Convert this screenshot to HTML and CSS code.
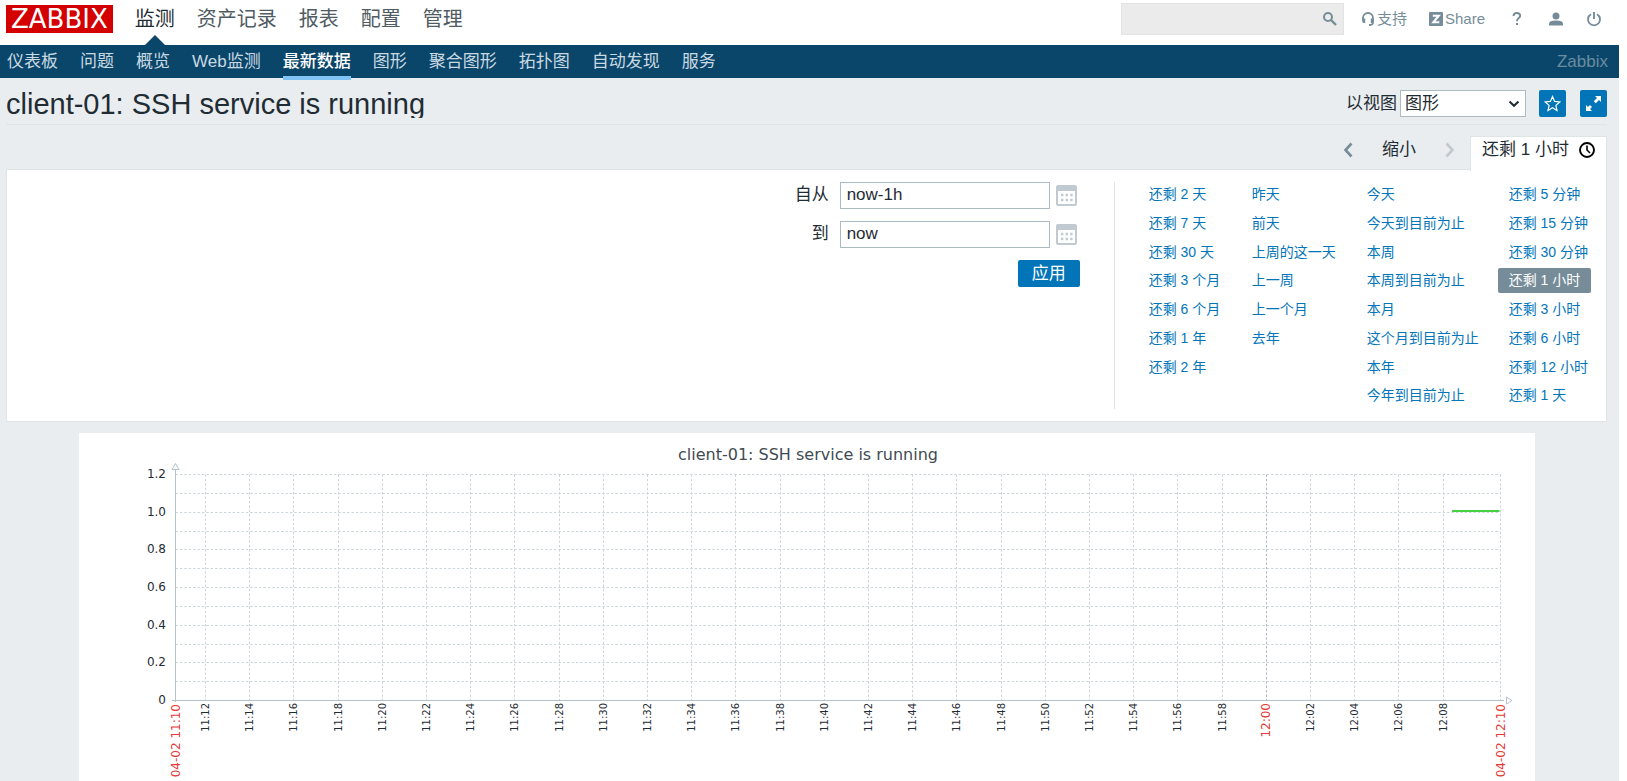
FILE: index.html
```html
<!DOCTYPE html>
<html lang="zh-CN">
<head>
<meta charset="utf-8">
<title>client-01: SSH service is running</title>
<link rel="stylesheet" href="styles.css">
</head>
<body>
<header class="top">
  <a class="logo" href="#">ZABBIX</a>
  <nav class="main-nav">
    <a class="selected" href="#">监测</a>
    <a href="#">资产记录</a>
    <a href="#">报表</a>
    <a href="#">配置</a>
    <a href="#">管理</a>
  </nav>
  <div class="tools">
    <form class="search">
      <input type="text" aria-label="搜索">
      <button type="button" aria-label="搜索">
        <svg width="16" height="16" viewBox="0 0 16 16"><circle cx="6" cy="6" r="4" fill="none" stroke="#768d99" stroke-width="2"/><path d="M9 9l5 5" stroke="#768d99" stroke-width="2.4"/></svg>
      </button>
    </form>
    <a class="support" href="#"><svg width="14" height="16" viewBox="0 0 14 16"><path d="M2 9V7a5 5 0 0 1 10 0V11.500Q12 14 8 14" fill="none" stroke="#768d99" stroke-width="1.800"/><path d="M1.200 7.500h3v4.500H2.800Q1.200 12 1.200 10zM9.800 7.500h3v2.500q0 2-1.500 2H9.800z" fill="#768d99"/></svg>支持</a>
    <a class="share" href="#"><svg width="14" height="14" viewBox="0 0 14 14"><rect width="14" height="14" rx="1" fill="#768d99"/><path d="M3.800 3.700h6L4.300 10.300H10.300" fill="none" stroke="#fff" stroke-width="2"/></svg>Share</a>
    <a class="help" href="#" aria-label="帮助"><svg width="10" height="16" viewBox="0 0 10 16"><path d="M1.500 5Q1.500 2 4.800 2T8.200 4.800Q8.200 6 6.500 7.200Q4.900 8.300 4.900 10.300" fill="none" stroke="#768d99" stroke-width="1.900"/><rect x="4" y="12" width="2" height="2" fill="#768d99"/></svg></a>
    <a class="user" href="#" aria-label="用户"><svg width="16" height="16" viewBox="0 0 16 16"><circle cx="8" cy="5" r="3.500" fill="#768d99"/><path d="M1 14.500V12.500Q1 9.500 8 9.500T15 12.500V14.500z" fill="#768d99"/></svg></a>
    <a class="power" href="#" aria-label="退出"><svg width="16" height="16" viewBox="0 0 16 16"><path d="M5 3.200A6 6 0 1 0 11 3.200M8 1v7" fill="none" stroke="#768d99" stroke-width="1.900"/></svg></a>
  </div>
</header>
<nav class="sub-nav">
  <a href="#">仪表板</a>
  <a href="#">问题</a>
  <a href="#">概览</a>
  <a href="#">Web监测</a>
  <a class="selected" href="#">最新数据</a>
  <a href="#">图形</a>
  <a href="#">聚合图形</a>
  <a href="#">拓扑图</a>
  <a href="#">自动发现</a>
  <a href="#">服务</a>
  <span class="server">Zabbix</span>
</nav>
<main>
  <div class="title-row">
    <h1>client-01: SSH service is running</h1>
    <form class="view">
      <label for="view-as">以视图</label>
      <span class="select-wrap"><select id="view-as"><option>图形</option></select><svg class="chevron" width="12" height="8" viewBox="0 0 12 8"><path d="M1.500 1.500L6 5.800L10.500 1.500" fill="none" stroke="#1f2c33" stroke-width="2"/></svg></span>
      <button class="square" type="button" aria-label="收藏"><svg width="17" height="17" viewBox="0 0 17 17"><path d="M8.500 1.500L10.600 6.400L15.800 6.900L11.900 10.400L13 15.500L8.500 12.800L4 15.500L5.100 10.400L1.200 6.900L6.400 6.400z" fill="none" stroke="#fff" stroke-width="1.200"/></svg></button>
      <button class="square" type="button" aria-label="全屏"><svg width="17" height="17" viewBox="0 0 17 17"><path d="M10 1h6v6l-2-2-3.200 3.200L8.800 6.200L12 3zM1 16v-6l2 2 2-2 2 2-2 2 2 2z" fill="#fff"/></svg></button>
    </form>
  </div>
  <div class="tabs">
    <button class="arrow" type="button" aria-label="后退"><svg width="10" height="16" viewBox="0 0 10 16"><path d="M8.500 1.500L2.500 8l6 6.500" fill="none" stroke="#768d99" stroke-width="2.600"/></svg></button>
    <button class="zoom-out" type="button">缩小</button>
    <button class="arrow" type="button" aria-label="前进"><svg width="10" height="16" viewBox="0 0 10 16"><path d="M1.500 1.500L7.500 8l-6 6.500" fill="none" stroke="#c0cad0" stroke-width="2.600"/></svg></button>
    <button class="tab" type="button">还剩 1 小时<svg width="18" height="18" viewBox="0 0 18 18"><circle cx="9" cy="9" r="7" fill="none" stroke="#000" stroke-width="1.900"/><path d="M9 4.500V9l3 3" fill="none" stroke="#000" stroke-width="1.600"/></svg></button>
  </div>
  <section class="panel">
    <form class="range">
      <label for="from">自从</label>
      <input id="from" type="text" value="now-1h">
      <button class="calendar" type="button" aria-label="日历"><svg width="21" height="21" viewBox="0 0 21 21"><rect x="1" y="1" width="19" height="19" rx="1" fill="none" stroke="#c0cad0" stroke-width="2"/><path d="M1 3.500h19" stroke="#c0cad0" stroke-width="5"/><path d="M5 10h12M5 15h12" stroke="#c0cad0" stroke-width="2.400" stroke-dasharray="2.400 2.200"/></svg></button>
      <label for="to">到</label>
      <input id="to" type="text" value="now">
      <button class="calendar" type="button" aria-label="日历"><svg width="21" height="21" viewBox="0 0 21 21"><rect x="1" y="1" width="19" height="19" rx="1" fill="none" stroke="#c0cad0" stroke-width="2"/><path d="M1 3.500h19" stroke="#c0cad0" stroke-width="5"/><path d="M5 10h12M5 15h12" stroke="#c0cad0" stroke-width="2.400" stroke-dasharray="2.400 2.200"/></svg></button>
      <button class="apply" type="button">应用</button>
    </form>
    <div class="presets">
      <ul>
        <li><a href="#">还剩 2 天</a></li><li><a href="#">还剩 7 天</a></li><li><a href="#">还剩 30 天</a></li><li><a href="#">还剩 3 个月</a></li><li><a href="#">还剩 6 个月</a></li><li><a href="#">还剩 1 年</a></li><li><a href="#">还剩 2 年</a></li>
      </ul>
      <ul>
        <li><a href="#">昨天</a></li><li><a href="#">前天</a></li><li><a href="#">上周的这一天</a></li><li><a href="#">上一周</a></li><li><a href="#">上一个月</a></li><li><a href="#">去年</a></li>
      </ul>
      <ul>
        <li><a href="#">今天</a></li><li><a href="#">今天到目前为止</a></li><li><a href="#">本周</a></li><li><a href="#">本周到目前为止</a></li><li><a href="#">本月</a></li><li><a href="#">这个月到目前为止</a></li><li><a href="#">本年</a></li><li><a href="#">今年到目前为止</a></li>
      </ul>
      <ul>
        <li><a href="#">还剩 5 分钟</a></li><li><a href="#">还剩 15 分钟</a></li><li><a href="#">还剩 30 分钟</a></li><li><a class="selected" href="#">还剩 1 小时</a></li><li><a href="#">还剩 3 小时</a></li><li><a href="#">还剩 6 小时</a></li><li><a href="#">还剩 12 小时</a></li><li><a href="#">还剩 1 天</a></li>
      </ul>
    </div>
  </section>
  <section class="graph">
    <svg id="chart" viewBox="0 0 1456 348" role="img" aria-label="client-01: SSH service is running">
      <text class="chart-title" x="729" y="27" text-anchor="middle">client-01: SSH service is running</text>
      <g id="grid"></g>
      <path class="axis" d="M96.500 36V269M93 267.500H1425"/>
      <path class="tip" d="M93 36.500L96.500 30.500L100 36.500zM1427.500 264L1433 267.500L1427.500 271z"/>
      <path class="series" d="M1373 78H1420.500"/>
      <g id="labels"></g>
    </svg>
  </section>
</main>
<script src="chart.js"></script>
</body>
</html>
```
FILE: styles.css
```css
* { box-sizing: border-box; }
html { overflow: hidden; }
body {
  margin: 0 8px 0 0;
  background: #fff;
  color: #1f2c33;
  font-family: "Liberation Sans", "Noto Sans CJK SC", sans-serif;
  font-size: 17px;
  line-height: 20px;
}
a { text-decoration: none; color: inherit; }
button, input, select { font: inherit; color: inherit; margin: 0; }
button { padding: 0; border: 0; background: none; cursor: pointer; }
svg { display: block; flex: none; }

.top { display: flex; height: 45px; padding: 0 12px 0 6px; }
.logo {
  align-self: flex-start;
  margin-top: 5px;
  padding: 0 5px;
  background: #d40000;
  color: #fff;
  font: 26px/28px "DejaVu Sans", sans-serif;
}
.main-nav { display: flex; gap: 22px; margin-left: 22px; font-size: 20px; line-height: 38px; color: #4f5c63; }
.main-nav a { position: relative; }
.main-nav .selected { color: #1f2c33; }
.main-nav .selected::after {
  content: "";
  position: absolute;
  left: 10px;
  bottom: 0;
  border: 10px solid transparent;
  border-top: 0;
  border-bottom-color: #0a466a;
}
.tools { display: flex; align-items: center; margin-left: auto; height: 38px; color: #768d99; font-size: 15px; }
.search { display: flex; align-items: center; width: 223px; height: 32px; padding-right: 5px; border: 1px solid #e3e3e3; background: #ebebeb; }
.search input { flex: 1; min-width: 0; height: 30px; border: 0; background: none; }
.support, .share { display: flex; align-items: center; gap: 2px; }
.support { margin-left: 17px; }
.share { margin-left: 22px; }
.help { margin-left: 27px; }
.user { margin-left: 26px; }
.power { margin-left: 22px; margin-right: 5px; }

.sub-nav { display: flex; gap: 22px; height: 33px; padding: 0 11px 0 7px; background: #0a466a; color: #c9d9e2; line-height: 33px; }
.sub-nav .selected { height: 35px; border-bottom: 4px solid #7fc4f5; color: #fff; font-weight: 500; }
.sub-nav .server { margin-left: auto; color: #6b8ca0; }

main { min-height: calc(100vh - 78px); padding: 0 12px 0 6px; background: #e9edf0; }
.title-row { display: flex; justify-content: space-between; height: 47px; border-bottom: 1px solid #dfe4e7; }
h1 { margin: 9px 0 0; height: 31px; overflow: hidden; font-size: 29px; font-weight: 400; line-height: 34px; }
.view { display: flex; align-items: center; height: 27px; margin-top: 12px; }
.select-wrap { position: relative; margin: 0 13px 0 3px; }
.view select { display: block; width: 126px; height: 27px; padding: 0 4px; border: 1px solid #acbbc2; border-radius: 0; background: #fff; appearance: none; }
.chevron { position: absolute; right: 6px; top: 10px; pointer-events: none; }
.square { display: grid; place-items: center; width: 27px; height: 27px; border-radius: 2px; background: #0275b8; }
.square + .square { margin-left: 14px; }

.tabs { display: flex; justify-content: flex-end; height: 45px; padding-top: 11px; }
.arrow { display: grid; place-items: center; width: 10px; height: 28px; }
.zoom-out { height: 27px; margin: 0 29px; }
.tab {
  display: flex;
  align-items: center;
  gap: 9px;
  position: relative;
  height: 35px;
  margin-left: 15px;
  padding: 0 10px 8px 11px;
  border: 1px solid #dfe4e7;
  border-bottom: 0;
  background: #fff;
}
.panel { display: flex; justify-content: flex-end; margin-top: -1px; padding: 12px 7px; border: 1px solid #dfe4e7; background: #fff; }
.range { display: grid; grid-template-columns: auto 210px 24px; column-gap: 6px; row-gap: 12px; align-content: start; justify-items: end; }
.range label { padding: 3px 5px 0 0; }
.range input { width: 100%; height: 27px; padding: 0 6px 2px; border: 1px solid #acbbc2; background: #fff; }
.calendar { align-self: center; justify-self: start; }
.apply { grid-column: 2 / 4; height: 27px; padding: 0 14px; border-radius: 2px; background: #0275b8; color: #fff; }
.presets { display: flex; min-height: 227px; margin-left: 34px; padding-left: 23px; border-left: 1px solid #dfe4e7; color: #0275b8; font-size: 14px; }
.presets ul { display: grid; grid-template-rows: repeat(8, 1fr); row-gap: 3px; margin: 0; padding: 0; list-style: none; }
.presets ul:nth-child(1) { width: 103px; }
.presets ul:nth-child(2) { width: 115px; }
.presets ul:nth-child(3) { width: 142px; }
.presets a { display: inline-block; padding: 0 11px; border-radius: 2px; line-height: 25px; white-space: nowrap; }
.presets .selected { background: #768d99; color: #fff; }

.graph { padding: 11px 72px 0 73px; }
.graph svg { width: 100%; height: auto; background: #fff; font-family: "DejaVu Sans", sans-serif; fill: #1f2c33; }
.chart-title { font-size: 16px; fill: #3f4b52; }
.axis { stroke: #b4c2c9; fill: none; }
.tip { stroke: #b4c2c9; fill: #fff; }
.series { stroke: #45d145; stroke-width: 2; }
.grid-line { stroke: #cbd5da; stroke-dasharray: 2.400 2; }
.grid-line.hour { stroke: #a9b8c2; }
.y-label { font-size: 12px; text-anchor: end; }
.x-label { font-size: 10px; text-anchor: end; }
.x-label.major { font-size: 12px; fill: #e53935; }
```
FILE: chart.js
```js
const NS = "http://www.w3.org/2000/svg";
const grid = document.getElementById("grid");
const labels = document.getElementById("labels");
const LEFT = 96.5, RIGHT = 1421.5, TOP = 41.5, BOTTOM = 267.5;

function line(x1, y1, x2, y2, cls) {
  const el = document.createElementNS(NS, "path");
  el.setAttribute("d", `M${x1} ${y1}L${x2} ${y2}`);
  el.setAttribute("class", cls);
  grid.append(el);
}

function text(value, x, y, cls, vertical) {
  const el = document.createElementNS(NS, "text");
  el.textContent = value;
  el.setAttribute("class", cls);
  if (vertical) el.setAttribute("transform", `translate(${x} ${y}) rotate(-90)`);
  else { el.setAttribute("x", x); el.setAttribute("y", y); }
  labels.append(el);
}

const ticks = ["1.2", "1.0", "0.8", "0.6", "0.4", "0.2", "0"];
for (let i = 0; i < 12; i++) {
  const y = Math.floor(TOP + i * (BOTTOM - TOP) / 12) + 0.5;
  line(LEFT, y, RIGHT, y, "grid-line");
}
ticks.forEach((t, i) => text(t, 87, Math.floor(TOP + i * (BOTTOM - TOP) / 6) + 4, "y-label"));

// One vertical line every two minutes, from 11:12 to 12:08.
for (let i = 0; i < 29; i++) {
  const minutes = 11 * 60 + 12 + i * 2;
  const label = Math.floor(minutes / 60) + ":" + String(minutes % 60).padStart(2, "0");
  const hour = minutes % 60 === 0;
  const x = Math.floor(126.5 + i * 44.2) + 0.5;
  line(x, TOP, x, BOTTOM, hour ? "grid-line hour" : "grid-line");
  text(label, x + 3.5, 270, hour ? "x-label major" : "x-label", true);
}
line(RIGHT, TOP, RIGHT, BOTTOM, "grid-line");
text("04-02 11:10", LEFT + 4, 271, "x-label major", true);
text("04-02 12:10", RIGHT + 4, 271, "x-label major", true);
```
